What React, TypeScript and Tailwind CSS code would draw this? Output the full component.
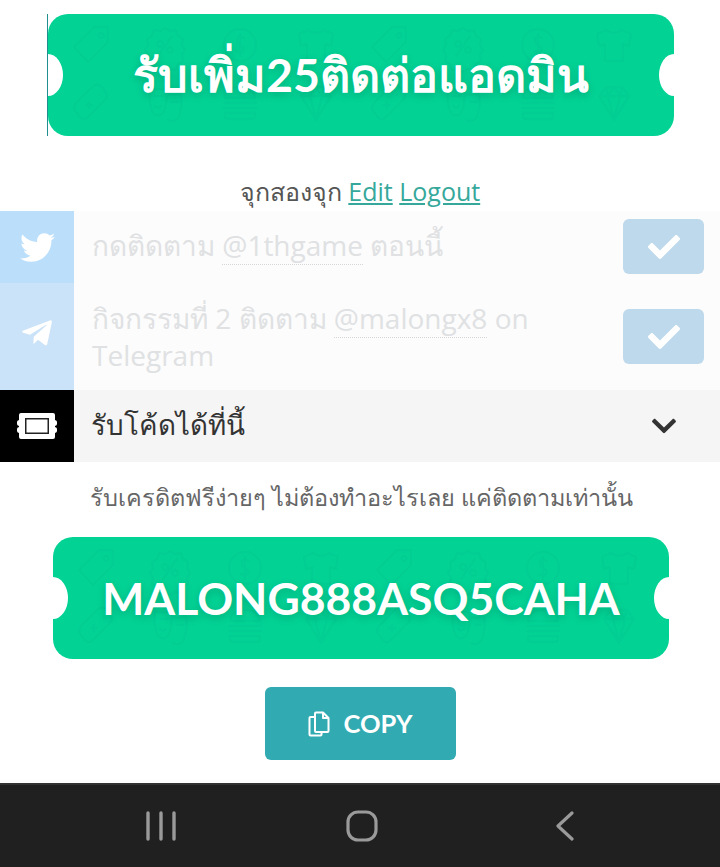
import React from "react";
import { FaTwitter, FaTelegramPlane, FaCheck, FaChevronDown } from "react-icons/fa";

const Icons = ({ x, y }: { x: number; y: number }) => (
  <g transform={`translate(${x} ${y})`} fill="none" stroke="#000" strokeOpacity="0.018" strokeWidth="2.4" strokeLinejoin="round" strokeLinecap="round">
    {/* tag */}
    <path d="M-16 33 L4 13 H18 V28 L-2 48 Z M11 19 a2.5 2.5 0 1 0 .1 0" />
    {/* percent badge */}
    <g transform="translate(75 0)">
      <path d="M0 14 l5 3 6-1 2 6 5 3-1 6 3 5-3 5 1 6-5 3-2 6-6-1-5 3-5-3-6 1-2-6-5-3 1-6-3-5 3-5-1-6 5-3 2-6 6 1z" />
      <path d="M-7 42 L7 22 M-5 27 a3 3 0 1 0 .1 0 M5 33 a3 3 0 1 0 .1 0" />
    </g>
    {/* coin */}
    <g transform="translate(150 0)">
      <circle cx="0" cy="31" r="16" />
      <path d="M4 24 q-4-3-7 0 q-1 5 3 7 q5 2 3 6 q-3 3-7 0 M0 20 v22" />
    </g>
    {/* shirt */}
    <g transform="translate(226 0)">
      <path d="M-8 16 q8 6 16 0 l9 4 -2 12 -6-2 v17 h-18 v-17 l-6 2 -2-12z" />
    </g>
    {/* gamepad */}
    <g transform="translate(0 60)">
      <path d="M-14 38 q-4-4 0-9 L3 12 q5-3 9 1 l4 6 q2 4-1 7 L-3 44 q-5 3-8-2z M-4 31 h6 M-1 28 v6 M9 21 h.1" />
    </g>
    {/* masks */}
    <g transform="translate(75 60)">
      <path d="M-15 14 q8 3 16 0 q2 16-3 25 q-5 5-10 0 q-5-9-3-25z M3 20 q7 2 13-1 q2 16-3 25 q-4 5-10 2" />
      <path d="M-10 22 h3 M-5 22 h3 M-10 32 q3 3 6 0 M7 28 h2 M11 28 h2" />
    </g>
    {/* burger */}
    <g transform="translate(150 60)">
      <path d="M-15 24 q1-11 15-11 q14 0 15 11z M-16 29 h32 M-16 34 h32 M-15 39 h30 v3 q0 3-3 3 h-24 q-3 0-3-3z" />
    </g>
    {/* diamond */}
    <g transform="translate(226 60)">
      <path d="M-8 13 H8 L15 22 L0 46 L-15 22Z M-15 22 H15 M-6 22 L0 46 L6 22 M-8 13 L-6 22 L0 13 L6 22 L8 13" />
    </g>
  </g>
);

const Ticket = ({ text, textClass }: { text: string; textClass: string }) => (
  <div className="relative h-[122px] rounded-[20px] bg-[#03d295] overflow-hidden flex items-center justify-center">
    <svg className="absolute inset-0 w-full h-full" preserveAspectRatio="xMinYMin slice" viewBox="0 0 626 122">
      <Icons x={42} y={0} />
      <Icons x={340} y={0} />
    </svg>
    <div className="absolute left-[-15px] top-[40px] w-[30px] h-[42px] rounded-[50%] bg-white" />
    <div className="absolute right-[-15px] top-[40px] w-[30px] h-[42px] rounded-[50%] bg-white" />
    <span className={`relative text-white [text-shadow:0_3px_8px_rgba(0,0,0,0.16)] ${textClass}`}>{text}</span>
  </div>
);

const CheckBtn = () => (
  <div className="w-[81px] h-[55px] rounded-[6px] bg-[#bed9ec] flex items-center justify-center shrink-0 text-white text-[32px]">
    <FaCheck />
  </div>
);

export default function App() {
  return (
    <div className="w-[720px] h-[867px] bg-white flex flex-col overflow-hidden font-['Open_Sans','Noto_Sans',sans-serif]">
      <div className="pt-[14px] pl-[47px] pr-[46px]">
        <div className="border-l border-[#1f8f8f]">
          <Ticket text="รับเพิ่ม25ติดต่อแอดมิน" textClass="text-[46.5px] font-bold font-['Lato','Noto_Sans',sans-serif]" />
        </div>
      </div>
      <div className="mt-[39px] h-[36px] text-center text-[25px] leading-[33px] text-[#555]">
        จุกสองจุก <a className="text-[#36a89b] underline">Edit</a> <a className="text-[#36a89b] underline">Logout</a>
      </div>
      <div className="flex h-[72px] bg-[#fcfcfc]">
        <div className="w-[74px] bg-[#bbdffb] flex items-center justify-center text-white text-[35px]"><FaTwitter /></div>
        <div className="flex-1 flex items-start pl-[18px] pr-[16px]">
          <div className="flex-1 pt-[16px] text-[28px] leading-[37px] text-[#dfe1e3]">
            กดติดตาม <span className="border-b border-dotted border-[#d4d6d8]">@1thgame</span> ตอนนี้
          </div>
          <div className="pt-[8px]"><CheckBtn /></div>
        </div>
      </div>
      <div className="flex h-[107px] bg-[#fcfcfc]">
        <div className="w-[74px] bg-[#cbe3f8] flex items-center justify-center text-white text-[34px] pb-[8px]"><FaTelegramPlane /></div>
        <div className="flex-1 flex items-start pl-[18px] pr-[16px]">
          <div className="flex-1 pt-[17px] pr-[40px] text-[28px] leading-[37px] text-[#dfe1e3]">
            กิจกรรมที่ 2 ติดตาม <span className="border-b border-dotted border-[#d4d6d8]">@malongx8</span> on Telegram
          </div>
          <div className="pt-[26px]"><CheckBtn /></div>
        </div>
      </div>
      <div className="flex h-[72px] bg-[#f5f5f5]">
        <div className="w-[74px] bg-black flex items-center justify-center">
          <svg width="40" height="27" viewBox="0 0 40 27">
            <path fill="#fff" d="M4 0 H36 q2 0 2 2 v5 q2 .5 2 2 v2 q0 1.500-2 2 v1 q2 .5 2 2 v2 q0 1.500-2 2 v4 q0 2-2 2 H4 q-2 0-2-2 v-4 q-2-.5-2-2 v-2 q0-1.500 2-2 v-1 q-2-.5-2-2 v-2 q0-1.500 2-2 V2 q0-2 2-2z" />
            <rect x="8.750" y="5.750" width="22.500" height="14.500" fill="#fff" stroke="#222" strokeWidth="1.500" />
          </svg>
        </div>
        <div className="flex-1 flex items-center justify-between pl-[17px] pr-[42px]">
          <span className="text-[27.75px] text-[#333] -mt-[3px]">รับโค้ดได้ที่นี้</span>
          <FaChevronDown className="text-[#333] text-[28px]" />
        </div>
      </div>
      <div className="h-[75px] pl-[90px] pt-[18px] text-[23.5px] leading-[34px] text-[#666]">
        รับเครดิตฟรีง่ายๆ ไม่ต้องทำอะไรเลย แค่ติดตามเท่านั้น
      </div>
      <div className="pl-[53px] pr-[51px]">
        <Ticket text="MALONG888ASQ5CAHA" textClass="text-[44.5px] font-bold font-['Lato','Noto_Sans',sans-serif]" />
      </div>
      <div className="mt-[28px] flex justify-center">
        <div className="w-[191px] h-[73px] rounded-[6px] bg-[#32aab2] flex items-center justify-center gap-[14px] text-white">
          <svg width="22" height="26" viewBox="0 0 22 26" fill="none" stroke="#fff" strokeWidth="2" strokeLinejoin="round">
            <path d="M8 1.500 h7 l5.500 5.500 v13 q0 1-1 1 H8 q-1 0-1-1 V2.500 q0-1 1-1z M15 1.500 v5.500 h5.500" />
            <path d="M7 6 H2.500 q-1 0-1 1 v16.500 q0 1 1 1 h10 q1 0 1-1 v-2.500" />
          </svg>
          <span className="font-['Lato',sans-serif] font-bold text-[25.5px]">COPY</span>
        </div>
      </div>
      <div className="mt-auto h-[84px] bg-[#202020] border-t-2 border-[#333] flex items-center">
        <svg className="ml-[146px]" width="30" height="30" viewBox="0 0 30 30" stroke="#9a9a9a" strokeWidth="3.4" strokeLinecap="round"><path d="M2 2v26M15 2v26M28 2v26" /></svg>
        <svg className="ml-[170px]" width="32" height="32" viewBox="0 0 32 32" fill="none" stroke="#9a9a9a" strokeWidth="3.2"><rect x="2" y="2" width="28" height="28" rx="10" /></svg>
        <svg className="ml-[177px]" width="20" height="30" viewBox="0 0 20 30" fill="none" stroke="#9a9a9a" strokeWidth="3.2" strokeLinecap="round" strokeLinejoin="round"><path d="M17 2 L3 15 L17 28" /></svg>
      </div>
    </div>
  );
}
